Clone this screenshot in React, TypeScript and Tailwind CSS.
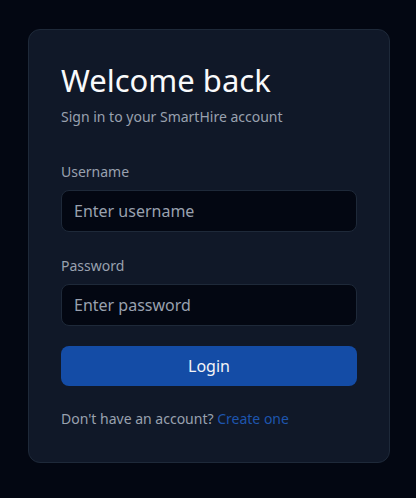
import type { JSX } from "react";

const Field = ({
  label,
  type,
  placeholder,
}: {
  label: string;
  type: string;
  placeholder: string;
}): JSX.Element => {
  return (
    <div className="flex flex-col">
      <label className="mb-2 text-sm leading-5 text-gray-400">{label}</label>
      <input
        type={type}
        placeholder={placeholder}
        className="h-[42px] w-full rounded-lg border border-gray-800 bg-gray-950 px-3 py-2 text-base leading-6 text-gray-100 placeholder:text-gray-400 outline-none"
      />
    </div>
  );
};

const App = (): JSX.Element => {
  return (
    <div
      className="min-h-[498px] bg-[#030712] pt-[29px] pl-[28px]"
      style={{ fontFamily: '"Noto Sans", "Open Sans", sans-serif' }}
    >
      <div className="w-[362px] rounded-xl border border-gray-800 bg-gray-900 px-8 pt-8 pb-[33px]">
        <h1 className="text-[31px] leading-[37px] font-normal text-gray-50">
          Welcome back
        </h1>
        <p className="mt-2 text-sm leading-5 text-gray-400">
          Sign in to your SmartHire account
        </p>
        <div className="mt-[35px] flex flex-col gap-6">
          <Field label="Username" type="text" placeholder="Enter username" />
          <Field label="Password" type="password" placeholder="Enter password" />
        </div>
        <button className="mt-5 h-10 w-full rounded-lg bg-[#144ca6] text-base leading-6 text-gray-100">
          Login
        </button>
        <p className="mt-[23px] text-sm leading-5 text-gray-400">
          Don't have an account?{" "}
          <a href="#" className="text-[#1e55ae]">
            Create one
          </a>
        </p>
      </div>
    </div>
  );
};

export default App;
